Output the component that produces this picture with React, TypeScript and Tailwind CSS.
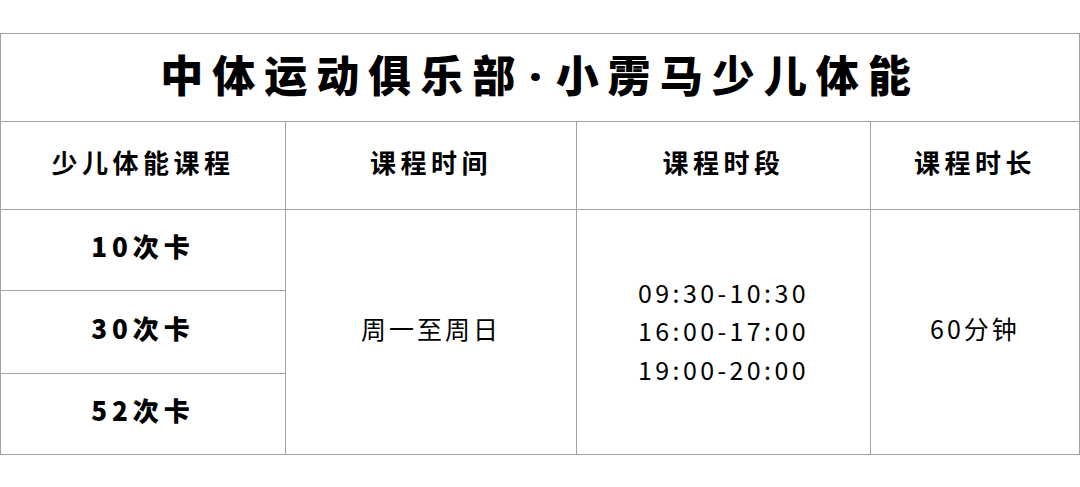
import type React from "react"

const font = { fontFamily: '"Noto Sans CJK SC", "Noto Sans", sans-serif' }

const cards = ["10次卡", "30次卡", "52次卡"]
const slots = ["09:30-10:30", "16:00-17:00", "19:00-20:00"]

const App: React.FC = () => {
  return (
    <div className="w-[1080px] h-[487px] bg-white pt-[33px] text-black" style={font}>
      <table className="w-[1079px] table-fixed border-collapse text-center">
        <colgroup>
          <col className="w-[285px]" />
          <col className="w-[291px]" />
          <col className="w-[294px]" />
          <col className="w-[209px]" />
        </colgroup>
        <tbody>
          {/* Title */}
          <tr className="h-[88px]">
            <td colSpan={4} className="border border-[#a3a3a3] p-0 pb-[6px]">
              <span className="text-[43px] font-black tracking-[9px] leading-none">
                中体运动俱乐部
                <span className="mx-[5px] font-black" style={{ fontFamily: '"Noto Sans", sans-serif' }}>
                  ·
                </span>
                小雳马少儿体能
              </span>
            </td>
          </tr>

          {/* Header */}
          <tr className="h-[88px] text-[26px] font-bold tracking-[4.5px]">
            <td className="border border-[#a3a3a3] p-0 pb-[8px]">少儿体能课程</td>
            <td className="border border-[#a3a3a3] p-0 pb-[8px]">课程时间</td>
            <td className="border border-[#a3a3a3] p-0 pb-[8px]">课程时段</td>
            <td className="border border-[#a3a3a3] p-0 pb-[8px]">课程时长</td>
          </tr>

          {/* Body */}
          {cards.map((card, i) => (
            <tr key={card} className={i === 1 ? "h-[83px]" : "h-[81px]"}>
              <td className="border border-[#a3a3a3] p-0 pb-[9px] text-[26px] font-black tracking-[5px]">{card}</td>
              {i === 0 && (
                <>
                  <td rowSpan={3} className="border border-[#a3a3a3] p-0 pb-[6px] text-[25px] tracking-[3px]">
                    周一至周日
                  </td>
                  <td rowSpan={3} className="border border-[#a3a3a3] p-0 pb-[3px] text-[25px] tracking-[3.4px] leading-[38.5px]">
                    {slots.map((s) => (
                      <div key={s}>{s}</div>
                    ))}
                  </td>
                  <td rowSpan={3} className="border border-[#a3a3a3] p-0 pb-[6px] text-[25px] tracking-[3px]">
                    60分钟
                  </td>
                </>
              )}
            </tr>
          ))}
        </tbody>
      </table>
    </div>
  )
}

export default App
